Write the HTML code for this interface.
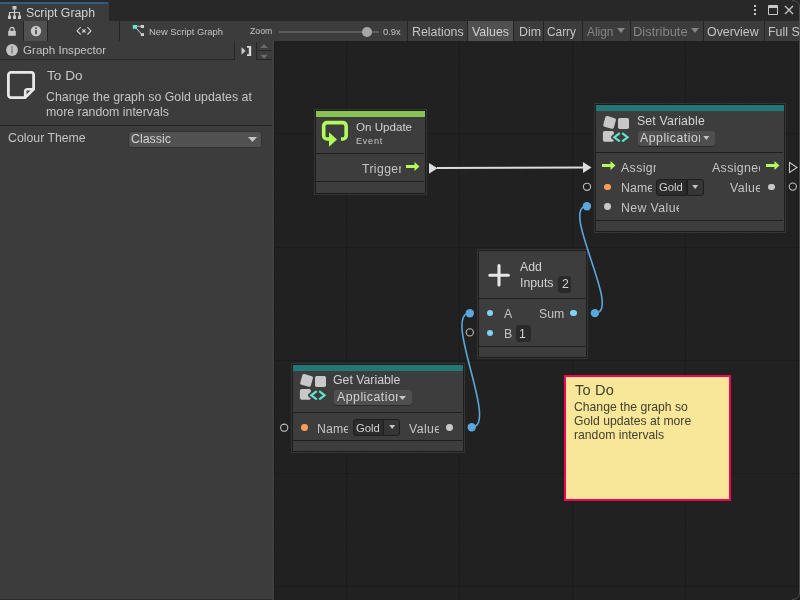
<!DOCTYPE html>
<html><head><meta charset="utf-8">
<style>
*{margin:0;padding:0;box-sizing:border-box}
html,body{width:800px;height:600px;overflow:hidden;background:#282828;font-family:"Liberation Sans",sans-serif;color:#c4c4c4}
.a{position:absolute}
.t{position:absolute;white-space:nowrap;line-height:1}
.clip{position:absolute;overflow:hidden;white-space:nowrap;line-height:1}
.tb{position:absolute;top:21px;height:20px;background:#3c3c3c}
.sep{position:absolute;width:1px;background:#262626}
.node{position:absolute;background:#3d3d3d;border:1px solid #1c1c1c}
.div{position:absolute;height:1px;background:#242424}
.dd{position:absolute;background:#4f4f4f;border-radius:3px;box-shadow:0 1px 0 #2a2a2a}
.fld{position:absolute;background:#2a2a2a;border-radius:3px}
.dot{position:absolute;border-radius:50%}
.t,.clip{will-change:transform}
</style></head><body>
<div class="a" style="left:0px;top:0px;width:800px;height:21px;background:#282828;"></div>
<div class="a" style="left:0px;top:2px;width:109px;height:19px;background:#3c3c3c;"></div>
<div class="a" style="left:0px;top:2px;width:108px;height:2px;background:#2d5e87;"></div>
<svg class="a" style="left:6.5px;top:5px" width="16" height="16" viewBox="0 0 16 16">
<rect x="5.5" y="1" width="4" height="3.5" fill="#c8c8c8"/>
<path d="M7.5 4.5V8M2.5 11V7.5H12.5V11M7.5 7.5V11" stroke="#c8c8c8" stroke-width="1.2" fill="none"/>
<rect x="1" y="10.5" width="3" height="3.5" fill="#c8c8c8"/><rect x="6" y="10.5" width="3" height="3.5" fill="#c8c8c8"/><rect x="11" y="10.5" width="3" height="3.5" fill="#c8c8c8"/>
</svg>
<div class="t" style="left:26px;top:6.89px;font-size:12.3px;color:#d2d2d2;">Script Graph</div>
<div class="a" style="left:754px;top:5px;width:2px;height:2px;background:#c8c8c8;"></div>
<div class="a" style="left:754px;top:9px;width:2px;height:2px;background:#c8c8c8;"></div>
<div class="a" style="left:754px;top:13px;width:2px;height:2px;background:#c8c8c8;"></div>
<div class="a" style="left:768px;top:5px;width:10px;height:10px;border:1px solid #c8c8c8;border-top:3px solid #c8c8c8;border-radius:1px"></div>
<svg class="a" style="left:784px;top:5px" width="10" height="10" viewBox="0 0 10 10"><path d="M1 1L9 9M9 1L1 9" stroke="#c8c8c8" stroke-width="1.3"/></svg>
<div class="a" style="left:0px;top:21px;width:800px;height:20px;background:#3c3c3c;"></div>
<div class="a" style="left:0px;top:41px;width:800px;height:1px;background:#242424;"></div>
<svg class="a" style="left:7px;top:26px" width="10" height="12" viewBox="0 0 10 12"><path d="M2.9 5V3.6a2.1 2.1 0 0 1 4.2 0V5" stroke="#c8c8c8" stroke-width="1.3" fill="none"/><rect x="1.2" y="4.8" width="7.6" height="5" fill="#c8c8c8"/></svg>
<div class="a" style="left:23px;top:21px;width:1px;height:20px;background:#242424;"></div>
<div class="a" style="left:24px;top:21px;width:23px;height:20px;background:#505050;"></div>
<svg class="a" style="left:30px;top:25px" width="12" height="12" viewBox="0 0 12 12"><circle cx="6" cy="6" r="5.2" fill="#c8c8c8"/><rect x="5.1" y="5" width="1.8" height="4.2" fill="#505050"/><circle cx="6" cy="3.3" r="1" fill="#505050"/></svg>
<div class="a" style="left:47px;top:21px;width:1px;height:20px;background:#242424;"></div>
<svg class="a" style="left:75px;top:25px" width="18" height="12" viewBox="0 0 18 12"><path d="M5.7 2.2L2.1 5.9L5.7 9.5M12.4 2.2L15.9 5.9L12.4 9.5" stroke="#d0d0d0" stroke-width="1.15" fill="none"/><path d="M7.3 4.3L10.5 7.5M10.5 4.3L7.3 7.5" stroke="#d0d0d0" stroke-width="1.15"/></svg>
<div class="a" style="left:119px;top:21px;width:1px;height:20px;background:#242424;"></div>
<svg class="a" style="left:132px;top:24px" width="14" height="13" viewBox="0 0 14 13"><path d="M4 2.3H9.5M4 4L10 10.5" stroke="#b8b8b8" stroke-width="1.1"/><rect x="0.8" y="1" width="4.2" height="3.8" fill="#62e8d2"/><rect x="8.8" y="1" width="3.2" height="3" fill="#d0d0d0"/><rect x="8.8" y="9.2" width="3.2" height="2.8" fill="#d0d0d0"/></svg>
<div class="t" style="left:149px;top:26.84px;font-size:9.4px;color:#c4c4c4;">New Script Graph</div>
<div class="t" style="left:250.3px;top:27.44px;font-size:8.7px;color:#c4c4c4;">Zoom</div>
<div class="a" style="left:279px;top:31px;width:100px;height:2px;background:#5c5c5c;"></div>
<div class="dot" style="left:361.8px;top:26.6px;width:10.4px;height:10.4px;background:#a6a6a6"></div>
<div class="t" style="left:383px;top:26.84px;font-size:9.4px;color:#c4c4c4;">0.9x</div>
<div class="a" style="left:407px;top:21px;width:1px;height:20px;background:#242424;"></div>
<div class="a" style="left:408px;top:21px;width:59px;height:20px;background:#3c3c3c;"></div>
<div class="a" style="left:467px;top:21px;width:1px;height:20px;background:#242424;"></div>
<div class="t" style="left:412px;top:26.30px;font-size:12.4px;color:#c4c4c4;">Relations</div>
<div class="a" style="left:468px;top:21px;width:45px;height:20px;background:#505050;"></div>
<div class="a" style="left:513px;top:21px;width:1px;height:20px;background:#242424;"></div>
<div class="t" style="left:471.5px;top:26.30px;font-size:12.4px;color:#d0d0d0;">Values</div>
<div class="a" style="left:514px;top:21px;width:29px;height:20px;background:#3c3c3c;"></div>
<div class="a" style="left:543px;top:21px;width:1px;height:20px;background:#242424;"></div>
<div class="t" style="left:518.5px;top:26.30px;font-size:12.4px;color:#c4c4c4;">Dim</div>
<div class="a" style="left:544px;top:21px;width:38px;height:20px;background:#3c3c3c;"></div>
<div class="a" style="left:582px;top:21px;width:1px;height:20px;background:#242424;"></div>
<div class="t" style="left:547.3px;top:26.77px;font-size:11.85px;color:#c4c4c4;">Carry</div>
<div class="a" style="left:583px;top:21px;width:47px;height:20px;background:#3c3c3c;"></div>
<div class="a" style="left:630px;top:21px;width:1px;height:20px;background:#242424;"></div>
<div class="t" style="left:586.5px;top:26.77px;font-size:11.85px;color:#858585;">Align</div>
<svg class="a" style="left:617px;top:28px" width="8" height="5" viewBox="0 0 8 5"><path d="M0 0H8L4 5Z" fill="#858585"/></svg>
<div class="a" style="left:631px;top:21px;width:72px;height:20px;background:#3c3c3c;"></div>
<div class="a" style="left:703px;top:21px;width:1px;height:20px;background:#242424;"></div>
<div class="t" style="left:633.2px;top:25.84px;font-size:12.95px;color:#858585;">Distribute</div>
<svg class="a" style="left:690.5px;top:28px" width="8" height="5" viewBox="0 0 8 5"><path d="M0 0H8L4 5Z" fill="#858585"/></svg>
<div class="a" style="left:704px;top:21px;width:60px;height:20px;background:#3c3c3c;"></div>
<div class="a" style="left:764px;top:21px;width:1px;height:20px;background:#242424;"></div>
<div class="t" style="left:707px;top:26.30px;font-size:12.4px;color:#c4c4c4;">Overview</div>
<div class="a" style="left:765px;top:21px;width:35px;height:20px;background:#3c3c3c;"></div>
<div class="a" style="left:800px;top:21px;width:1px;height:20px;background:#242424;"></div>
<div class="t" style="left:768px;top:26.30px;font-size:12.4px;color:#c4c4c4;">Full S</div>
<div class="a" style="left:0px;top:41px;width:274px;height:559px;background:#3c3c3c;"></div>
<div class="a" style="left:0px;top:41px;width:234px;height:18px;background:#3c3c3c;"></div>
<div class="a" style="left:234px;top:41px;width:1px;height:19px;background:#262626;"></div>
<svg class="a" style="left:5px;top:43px" width="14" height="14" viewBox="0 0 14 14"><circle cx="7" cy="7" r="5.9" fill="#c4c4c4"/><rect x="6.1" y="3" width="1.8" height="7.6" fill="#8a8a8a"/><rect x="6.1" y="4.6" width="1.8" height="1" fill="#a8a8a8"/></svg>
<div class="t" style="left:22.5px;top:43.88px;font-size:11.6px;color:#c4c4c4;">Graph Inspector</div>
<svg class="a" style="left:240px;top:45px" width="13" height="12" viewBox="0 0 13 12"><path d="M1.5 2L5.6 5.9L1.5 9.8Z" fill="#c8c8c8"/><path d="M7 1.8H10V10.1H7" stroke="#d8d8d8" stroke-width="1.7" fill="none"/><rect x="8.8" y="1" width="2.4" height="10" fill="#d8d8d8"/></svg>
<div class="a" style="left:256px;top:42px;width:1px;height:17px;background:#262626;"></div>
<div class="a" style="left:257px;top:50px;width:15px;height:1px;background:#2b2b2b;"></div>
<div class="a" style="left:256px;top:59px;width:17px;height:1px;background:#262626;"></div>
<div class="a" style="left:0px;top:59px;width:235px;height:1px;background:#262626;"></div>
<svg class="a" style="left:259px;top:43px" width="12" height="17" viewBox="0 0 12 17"><path d="M1.2 4.9H8.8L5 0.9Z" fill="#6a6a6a"/><path d="M1.2 11.8H8.8L5 15.9Z" fill="#6a6a6a"/></svg>
<svg class="a" style="left:6px;top:70px" width="31" height="31" viewBox="0 0 31 31"><path d="M5 2.4H25A2.6 2.6 0 0 1 27.6 5V19.2L19.2 27.6H5A2.6 2.6 0 0 1 2.4 25V5A2.6 2.6 0 0 1 5 2.4Z" stroke="#e8e8e8" stroke-width="2.8" fill="none" stroke-linejoin="round"/><path d="M27.6 19.2H21.6A2.4 2.4 0 0 0 19.2 21.6V27.6" stroke="#e8e8e8" stroke-width="2.6" fill="none" stroke-linejoin="round"/></svg>
<div class="t" style="left:46.5px;top:69.29px;font-size:13.6px;color:#c8c8c8;">To Do</div>
<div class="t" style="left:46px;top:91.15px;font-size:12.35px;color:#c4c4c4;">Change the graph so Gold updates at</div>
<div class="t" style="left:46px;top:106.15px;font-size:12.35px;color:#c4c4c4;">more random intervals</div>
<div class="a" style="left:0px;top:125px;width:272px;height:1px;background:#232323;"></div>
<div class="t" style="left:8px;top:132.39px;font-size:12.3px;color:#c4c4c4;">Colour Theme</div>
<div class="dd" style="left:127.5px;top:130.6px;width:134px;height:17px;background:#515151;border:1px solid #333333;box-shadow:none"></div>
<div class="t" style="left:131px;top:133.30px;font-size:12.4px;color:#d2d2d2;">Classic</div>
<svg class="a" style="left:248px;top:137px" width="9" height="5" viewBox="0 0 9 5"><path d="M0 0H9L4.5 5Z" fill="#c4c4c4"/></svg>
<div class="a" style="left:272px;top:41px;width:2px;height:559px;background:#404040;"></div>
<div class="a" style="left:274px;top:41px;width:526px;height:559px;background:#212121;"></div>
<svg class="a" style="left:0;top:0" width="800" height="600" viewBox="0 0 800 600"><path d="M278.5 41V600 M289.5 41V600 M300.5 41V600 M312.5 41V600 M323.5 41V600 M334.5 41V600 M357.5 41V600 M368.5 41V600 M380.5 41V600 M391.5 41V600 M402.5 41V600 M414.5 41V600 M425.5 41V600 M436.5 41V600 M447.5 41V600 M470.5 41V600 M481.5 41V600 M493.5 41V600 M504.5 41V600 M515.5 41V600 M527.5 41V600 M538.5 41V600 M549.5 41V600 M561.5 41V600 M583.5 41V600 M595.5 41V600 M606.5 41V600 M617.5 41V600 M629.5 41V600 M640.5 41V600 M651.5 41V600 M663.5 41V600 M674.5 41V600 M697.5 41V600 M708.5 41V600 M719.5 41V600 M730.5 41V600 M742.5 41V600 M753.5 41V600 M764.5 41V600 M776.5 41V600 M787.5 41V600 M274 43.5H800 M274 54.5H800 M274 65.5H800 M274 77.5H800 M274 88.5H800 M274 99.5H800 M274 111.5H800 M274 122.5H800 M274 145.5H800 M274 156.5H800 M274 167.5H800 M274 179.5H800 M274 190.5H800 M274 201.5H800 M274 213.5H800 M274 224.5H800 M274 235.5H800 M274 258.5H800 M274 269.5H800 M274 280.5H800 M274 292.5H800 M274 303.5H800 M274 314.5H800 M274 326.5H800 M274 337.5H800 M274 348.5H800 M274 371.5H800 M274 382.5H800 M274 394.5H800 M274 405.5H800 M274 416.5H800 M274 428.5H800 M274 439.5H800 M274 450.5H800 M274 462.5H800 M274 484.5H800 M274 496.5H800 M274 507.5H800 M274 518.5H800 M274 530.5H800 M274 541.5H800 M274 552.5H800 M274 563.5H800 M274 575.5H800 M274 597.5H800" stroke="#1f1f1f" stroke-width="1" fill="none" opacity="0.6"/><path d="M346.5 41V600 M459.5 41V600 M572.5 41V600 M685.5 41V600 M798.5 41V600 M274 133.5H800 M274 247.5H800 M274 360.5H800 M274 473.5H800 M274 586.5H800" stroke="#1b1b1b" stroke-width="1" fill="none"/></svg>
<div class="a" style="left:274px;top:41px;width:1px;height:559px;background:#1c1c1c;"></div>
<div class="a" style="left:314px;top:109px;width:113px;height:86px;background:#363636;"></div>
<div class="node" style="left:315px;top:110px;width:111px;height:84px"></div>
<div class="a" style="left:316px;top:111px;width:109px;height:6px;background:#89c351;"></div>
<div class="a" style="left:316px;top:153px;width:108px;height:1px;background:#1e1e1e;"></div>
<div class="a" style="left:316px;top:181px;width:108px;height:1px;background:#1e1e1e;"></div>
<svg class="a" style="left:318px;top:117px" width="34" height="34" viewBox="0 0 34 34"><path d="M23 22H24.85A3.3 3.3 0 0 0 28.15 18.7V8.9A3.3 3.3 0 0 0 24.85 5.6H9A3.3 3.3 0 0 0 5.7 8.9V18.7A3.3 3.3 0 0 0 9 22H12" stroke="#b2fb5a" stroke-width="3.6" fill="none"/><path d="M11 15.3L19 22.5L11 29.7Z" fill="#b2fb5a"/></svg>
<div class="t" style="left:356px;top:121.18px;font-size:11.6px;color:#d2d2d2;">On Update</div>
<div class="t" style="left:356.3px;top:137.18px;font-size:9.0px;color:#c4c4c4;letter-spacing:0.8px">Event</div>
<div class="clip" style="left:362px;top:161.37px;width:38.5px;height:15.9px;padding-top:2px;font-size:12.2px;color:#c4c4c4;letter-spacing:0.4px">Trigger</div>
<svg class="a" style="left:405.5px;top:162px" width="14" height="9" viewBox="0 0 14 9"><path d="M0 3H8.5V0L13.5 4.5L8.5 9V6H0Z" fill="#b2fb5a"/></svg>
<svg class="a" style="left:0;top:0" width="800" height="600" viewBox="0 0 800 600">
<path d="M429 163L437.5 168.3L429 173.8Z" fill="#dcdcdc"/>
<path d="M437 168.1L584 167.6" stroke="#dcdcdc" stroke-width="2"/>
<path d="M583 162L591.5 167.5L583 173Z" fill="#dcdcdc"/>
<circle cx="587" cy="186.8" r="3.6" stroke="#bdbdbd" stroke-width="1.1" fill="none"/>
</svg>
<div class="a" style="left:594px;top:103px;width:192px;height:130px;background:#363636;"></div>
<div class="node" style="left:595px;top:104px;width:190px;height:128px"></div>
<div class="a" style="left:596px;top:105px;width:188px;height:6px;background:#237777;"></div>
<div class="a" style="left:596px;top:152px;width:187px;height:1px;background:#1e1e1e;"></div>
<div class="a" style="left:596px;top:220px;width:187px;height:1px;background:#1e1e1e;"></div>
<svg class="a" style="left:600px;top:112px" width="32" height="34" viewBox="0 0 32 34">
<rect x="4.1" y="4.9" width="11" height="11" rx="1.8" fill="#c8c8c8" transform="rotate(16 9.6 10.4)"/>
<rect x="18" y="5.9" width="11" height="11.1" rx="1.8" fill="#c8c8c8"/>
<rect x="2.9" y="19" width="11" height="10.7" rx="1.8" fill="#c8c8c8"/>
<path d="M20.5 20.2L13.2 25.3L20.5 30.4" stroke="#3e3e3e" stroke-width="4.4" fill="none" stroke-linejoin="round"/>
<path d="M19.8 21.2L14.2 25.3L19.8 29.4" stroke="#5fe6cb" stroke-width="2.1" fill="none" stroke-linejoin="miter"/>
<path d="M22.2 21.2L27.6 25.3L22.2 29.4" stroke="#5fe6cb" stroke-width="2.1" fill="none" stroke-linejoin="miter"/>
</svg>
<div class="t" style="left:637px;top:115.29px;font-size:12.3px;color:#d2d2d2;letter-spacing:0.15px">Set Variable</div>
<div class="dd" style="left:638px;top:131px;width:77px;height:15px"></div>
<div class="clip" style="left:640px;top:130.19px;width:60px;height:16.0px;padding-top:2px;font-size:12.3px;color:#d2d2d2;letter-spacing:0.5px">Application</div>
<svg class="a" style="left:703.2px;top:136px" width="7" height="5" viewBox="0 0 7 5"><path d="M0.3 0H6.3L3.3 4Z" fill="#c4c4c4"/></svg>
<svg class="a" style="left:601.5px;top:161px" width="14" height="9" viewBox="0 0 14 9"><path d="M0 3H8.5V0L13.5 4.5L8.5 9V6H0Z" fill="#b2fb5a"/></svg>
<div class="clip" style="left:621px;top:160.39px;width:35px;height:16.0px;padding-top:2px;font-size:12.3px;color:#c4c4c4;letter-spacing:0.4px">Assign</div>
<div class="clip" style="left:712px;top:160.39px;width:47.7px;height:16.0px;padding-top:2px;font-size:12.3px;color:#c4c4c4;letter-spacing:0.4px">Assigned</div>
<svg class="a" style="left:765.5px;top:161px" width="14" height="9" viewBox="0 0 14 9"><path d="M0 3H8.5V0L13.5 4.5L8.5 9V6H0Z" fill="#b2fb5a"/></svg>
<div class="dot" style="left:603.8px;top:183.6px;width:6.9px;height:6.9px;background:#fe9d58"></div>
<div class="clip" style="left:621px;top:180.39px;width:31px;height:16.0px;padding-top:2px;font-size:12.3px;color:#c4c4c4;letter-spacing:0.1px">Name</div>
<div class="a" style="left:656px;top:179px;width:31px;height:16.5px;background:#2b2b2b;border:1px solid #1f1f1f;border-radius:3px 0 0 3px"></div>
<div class="a" style="left:686.5px;top:179px;width:17px;height:16.5px;background:#353535;border:1px solid #1f1f1f;border-radius:0 3px 3px 0"></div>
<div class="t" style="left:659.4px;top:182.13px;font-size:11.3px;color:#d2d2d2;">Gold</div>
<svg class="a" style="left:692px;top:185px" width="7" height="5" viewBox="0 0 7 5"><path d="M0.2 0H6.2L3.2 4Z" fill="#c4c4c4"/></svg>
<div class="clip" style="left:730px;top:180.39px;width:29.5px;height:16.0px;padding-top:2px;font-size:12.3px;color:#c4c4c4;letter-spacing:0.4px">Value</div>
<div class="dot" style="left:767.8px;top:183.6px;width:6.9px;height:6.9px;background:#c8c8c8"></div>
<div class="dot" style="left:603.8px;top:202.9px;width:6.9px;height:6.9px;background:#c8c8c8"></div>
<div class="clip" style="left:621px;top:199.89px;width:57.5px;height:16.0px;padding-top:2px;font-size:12.3px;color:#c4c4c4;letter-spacing:0.4px">New Value</div>
<svg class="a" style="left:0;top:0" width="800" height="600" viewBox="0 0 800 600">
<path d="M789.5 162.5L797 167.5L789.5 172.5Z" stroke="#c8c8c8" stroke-width="1.1" fill="none"/>
<circle cx="792.8" cy="186.6" r="3.6" stroke="#bdbdbd" stroke-width="1.1" fill="none"/>
</svg>
<div class="a" style="left:477px;top:249px;width:111px;height:110px;background:#363636;"></div>
<div class="node" style="left:478px;top:250px;width:109px;height:108px"></div>
<div class="a" style="left:479px;top:298px;width:106px;height:1px;background:#1e1e1e;"></div>
<div class="a" style="left:479px;top:346px;width:106px;height:1px;background:#1e1e1e;"></div>
<svg class="a" style="left:486px;top:263px" width="26" height="26" viewBox="0 0 26 26"><path d="M13 2.6V22M3.8 12.2H22.4" stroke="#e6e6e6" stroke-width="3.1" stroke-linecap="round"/></svg>
<div class="t" style="left:520px;top:261.39px;font-size:12.3px;color:#d2d2d2;">Add</div>
<div class="t" style="left:520px;top:277.39px;font-size:12.3px;color:#d2d2d2;">Inputs</div>
<div class="fld" style="left:558px;top:276px;width:13px;height:16.5px"></div>
<div class="t" style="left:561.5px;top:278.39px;font-size:12.3px;color:#d2d2d2;">2</div>
<div class="dot" style="left:486.6px;top:309.6px;width:6.9px;height:6.9px;background:#80d2fb"></div>
<div class="t" style="left:504px;top:308.39px;font-size:12.3px;color:#c4c4c4;">A</div>
<div class="t" style="left:538.6px;top:308.39px;font-size:12.3px;color:#c4c4c4;">Sum</div>
<div class="dot" style="left:569.9px;top:309.6px;width:6.9px;height:6.9px;background:#80d2fb"></div>
<div class="dot" style="left:486.6px;top:329.6px;width:6.9px;height:6.9px;background:#80d2fb"></div>
<div class="t" style="left:504px;top:328.39px;font-size:12.3px;color:#c4c4c4;">B</div>
<div class="fld" style="left:516px;top:325px;width:14.5px;height:16.5px"></div>
<div class="t" style="left:519px;top:327.89px;font-size:12.3px;color:#d2d2d2;">1</div>
<div class="a" style="left:291px;top:363px;width:174px;height:90px;background:#363636;"></div>
<div class="node" style="left:292px;top:364px;width:172px;height:88px"></div>
<div class="a" style="left:293px;top:365px;width:170px;height:6px;background:#237777;"></div>
<div class="a" style="left:293px;top:412px;width:169px;height:1px;background:#1e1e1e;"></div>
<div class="a" style="left:293px;top:440px;width:169px;height:1px;background:#1e1e1e;"></div>
<svg class="a" style="left:297px;top:370px" width="32" height="34" viewBox="0 0 32 34">
<rect x="4.1" y="4.9" width="11" height="11" rx="1.8" fill="#c8c8c8" transform="rotate(16 9.6 10.4)"/>
<rect x="18" y="5.9" width="11" height="11.1" rx="1.8" fill="#c8c8c8"/>
<rect x="2.9" y="19" width="11" height="10.7" rx="1.8" fill="#c8c8c8"/>
<path d="M20.5 20.2L13.2 25.3L20.5 30.4" stroke="#3e3e3e" stroke-width="4.4" fill="none" stroke-linejoin="round"/>
<path d="M19.8 21.2L14.2 25.3L19.8 29.4" stroke="#5fe6cb" stroke-width="2.1" fill="none" stroke-linejoin="miter"/>
<path d="M22.2 21.2L27.6 25.3L22.2 29.4" stroke="#5fe6cb" stroke-width="2.1" fill="none" stroke-linejoin="miter"/>
</svg>
<div class="t" style="left:333px;top:374.19px;font-size:12.3px;color:#d2d2d2;">Get Variable</div>
<div class="dd" style="left:334px;top:390px;width:77.5px;height:15px"></div>
<div class="clip" style="left:336.5px;top:389.39px;width:60.5px;height:16.0px;padding-top:2px;font-size:12.3px;color:#d2d2d2;letter-spacing:0.5px">Application</div>
<svg class="a" style="left:398.8px;top:395.5px" width="7" height="5" viewBox="0 0 7 5"><path d="M0 0H7L3.5 4Z" fill="#c4c4c4"/></svg>
<div class="dot" style="left:300.8px;top:424.2px;width:6.9px;height:6.9px;background:#fe9d58"></div>
<div class="clip" style="left:317px;top:420.89px;width:31px;height:16.0px;padding-top:2px;font-size:12.3px;color:#c4c4c4;letter-spacing:0.1px">Name</div>
<div class="a" style="left:352.5px;top:419.3px;width:31px;height:16.5px;background:#2b2b2b;border:1px solid #1f1f1f;border-radius:3px 0 0 3px"></div>
<div class="a" style="left:383.0px;top:419.3px;width:17px;height:16.5px;background:#353535;border:1px solid #1f1f1f;border-radius:0 3px 3px 0"></div>
<div class="t" style="left:355.9px;top:423.23px;font-size:11.3px;color:#d2d2d2;">Gold</div>
<svg class="a" style="left:388.5px;top:425.3px" width="7" height="5" viewBox="0 0 7 5"><path d="M0.2 0H6.2L3.2 4Z" fill="#c4c4c4"/></svg>
<div class="clip" style="left:409px;top:420.89px;width:30px;height:16.0px;padding-top:2px;font-size:12.3px;color:#c4c4c4;letter-spacing:0.4px">Value</div>
<div class="dot" style="left:445.7px;top:423.7px;width:6.9px;height:6.9px;background:#c8c8c8"></div>
<svg class="a" style="left:0;top:0" width="800" height="600" viewBox="0 0 800 600">
<path d="M595 313C623 313 559 206.3 587 206.3" stroke="#5aa7de" stroke-width="1.6" fill="none"/>
<path d="M471.7 427.2C499.7 427.2 441.8 313.3 469.8 313.3" stroke="#5aa7de" stroke-width="1.6" fill="none"/>
<circle cx="586.9" cy="206.3" r="4.2" fill="#5aa7de"/>
<circle cx="594.9" cy="313.1" r="4.2" fill="#5aa7de"/>
<circle cx="469.8" cy="313.3" r="4.2" fill="#5aa7de"/>
<circle cx="471.7" cy="427.2" r="4.2" fill="#5aa7de"/>
<circle cx="469.8" cy="332.4" r="3.6" stroke="#bdbdbd" stroke-width="1.1" fill="none"/>
<circle cx="284.2" cy="427.7" r="3.6" stroke="#bdbdbd" stroke-width="1.1" fill="none"/>
</svg>
<div class="a" style="left:564px;top:375px;width:167px;height:126px;background:#f8e699;border:2px solid #f5015a"></div>
<div class="t" style="left:574.5px;top:383.44px;font-size:14.6px;color:#43402f;letter-spacing:0.2px">To Do</div>
<div class="t" style="left:574px;top:401.47px;font-size:12.2px;color:#43402f;">Change the graph so</div>
<div class="t" style="left:574px;top:415.37px;font-size:12.2px;color:#43402f;">Gold updates at more</div>
<div class="t" style="left:574px;top:428.87px;font-size:12.2px;color:#43402f;">random intervals</div>
<svg class="a" style="left:0;top:0" width="800" height="600" viewBox="0 0 800 600"><path d="M792 0.5Q799.5 0.5 799.5 8V592Q799.5 599.5 792 599.5" stroke="#4e4e4e" stroke-width="1" fill="none"/></svg>
<div class="a" style="left:0px;top:599px;width:272px;height:1px;background:#2b2b2b;"></div>
</body></html>
